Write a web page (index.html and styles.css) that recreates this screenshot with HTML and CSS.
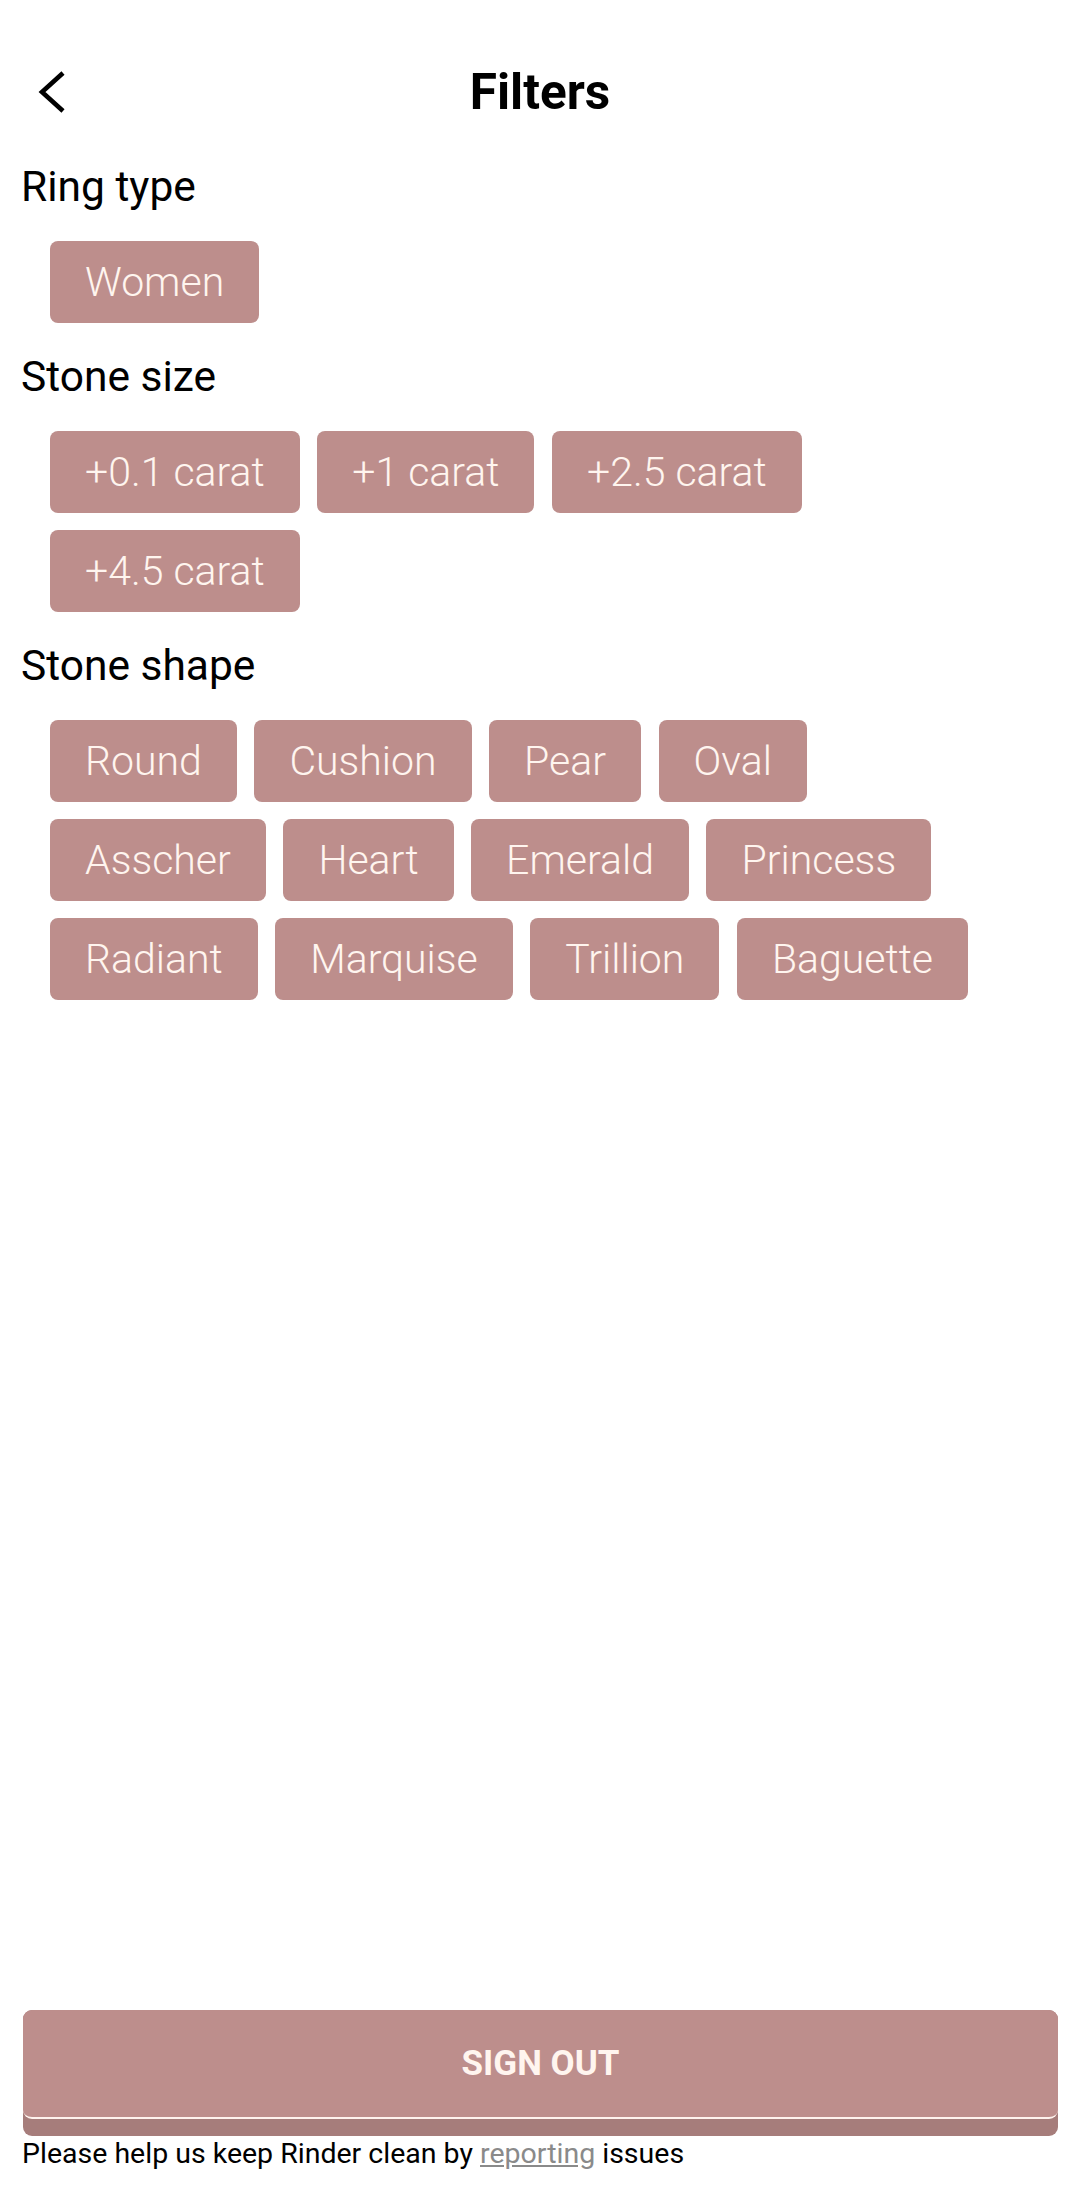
FILE: index.html
```html
<!DOCTYPE html>
<html lang="en">
<head>
<meta charset="utf-8">
<title>Filters</title>
<link rel="stylesheet" href="styles.css">
</head>
<body>
<div class="page">
  <header class="header">
    <div class="back">
      <svg width="40" height="50" viewBox="0 0 40 50" aria-hidden="true">
        <polyline points="31,6 10,25 31,44" fill="none" stroke="#000" stroke-width="4.6" stroke-linecap="butt" stroke-linejoin="miter"/>
      </svg>
    </div>
    <h1 class="title">Filters</h1>
    <div></div>
  </header>

  <main class="content">
    <section class="section">
      <h2 class="section-title">Ring type</h2>
      <div class="chips">
        <span class="chip">Women</span>
      </div>
    </section>

    <section class="section">
      <h2 class="section-title">Stone size</h2>
      <div class="chips">
        <span class="chip">+0.1 carat</span>
        <span class="chip">+1 carat</span>
        <span class="chip">+2.5 carat</span>
        <span class="chip">+4.5 carat</span>
      </div>
    </section>

    <section class="section">
      <h2 class="section-title">Stone shape</h2>
      <div class="chips">
        <span class="chip">Round</span>
        <span class="chip">Cushion</span>
        <span class="chip">Pear</span>
        <span class="chip">Oval</span>
        <span class="chip">Asscher</span>
        <span class="chip">Heart</span>
        <span class="chip">Emerald</span>
        <span class="chip">Princess</span>
        <span class="chip">Radiant</span>
        <span class="chip">Marquise</span>
        <span class="chip">Trillion</span>
        <span class="chip">Baguette</span>
      </div>
    </section>
  </main>

  <footer class="footer">
    <div class="signout">
      <div class="signout-face">SIGN OUT</div>
    </div>
    <p class="note">Please help us keep Rinder clean by <a class="link" href="#">reporting</a> issues</p>
  </footer>
</div>
</body>
</html>
```

FILE: styles.css
```css
* { box-sizing: border-box; }

html, body {
  margin: 0;
  padding: 0;
  background: #ffffff;
}

body {
  font-family: Roboto, "Noto Sans", "Liberation Sans", sans-serif;
  color: #000;
}

.page {
  width: 1080px;
  height: 2204px;
  display: flex;
  flex-direction: column;
}

.header {
  display: grid;
  grid-template-columns: 1fr auto 1fr;
  align-items: center;
  padding-top: 63px;
}

.back {
  justify-self: start;
  margin-left: 32px;
  display: flex;
}

.title {
  margin: 0;
  font-size: 49.5px;
  line-height: 58px;
  font-weight: 700;
}

.content {
  flex: 1;
  padding: 42px 20px 0 21px;
}

.section {
  margin-bottom: 30px;
}

.section-title {
  margin: 0;
  font-size: 42.5px;
  line-height: 48px;
  font-weight: 400;
}

.chips {
  display: flex;
  flex-wrap: wrap;
  gap: 17px 17.5px;
  margin-top: 30px;
  padding-left: 29px;
  padding-right: 30px;
}

.chip {
  height: 82px;
  padding: 0 35px;
  display: flex;
  align-items: center;
  background: #bd8e8c;
  color: #fff5ef;
  border-radius: 8px;
  font-size: 41px;
  font-weight: 300;
  white-space: nowrap;
}

.footer {
  padding: 0 22px 34px 21px;
}

.signout {
  margin-left: 2px;
  height: 126px;
  background: #a67d7b;
  border-radius: 9px;
}

.signout-face {
  height: 109px;
  background: #bd8e8c;
  border-radius: 9px;
  border-bottom: 2px solid #fff3ee;
  display: flex;
  align-items: center;
  justify-content: center;
  color: #fff5ef;
  font-size: 35px;
  font-weight: 700;
}

.note {
  margin: 2px 0 0 1px;
  font-size: 28.5px;
  line-height: 32px;
  color: #000;
}

.link {
  color: #8a8a8a;
  text-decoration: underline;
}
```
